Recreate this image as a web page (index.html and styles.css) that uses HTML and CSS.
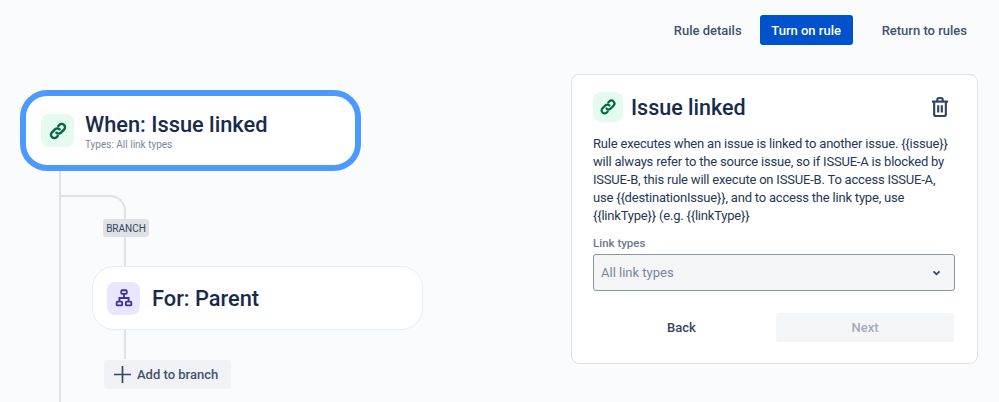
FILE: index.html
```html
<!DOCTYPE html>
<html lang="en">
<head>
<meta charset="utf-8">
<title>Rule</title>
<link rel="stylesheet" href="styles.css">
</head>
<body>
<div class="page">
  <nav class="topbar">
    <a class="nav-link nav-details">Rule details</a>
    <a class="nav-primary">Turn on rule</a>
    <a class="nav-link nav-return">Return to rules</a>
  </nav>
  <main class="workspace">
    <section class="canvas">
      <span class="line main-line"></span>
      <span class="branch-curve"></span>
      <span class="line branch-line"></span>
      <div class="trigger node">
        <span class="tile tile-green">
          <svg class="glyph" viewBox="0 0 24 24" fill="none" stroke="#006644" stroke-width="2.6" stroke-linecap="round"><path d="M10.2 13.8a3.6 3.6 0 0 0 5.1 0l3.3-3.3a3.6 3.6 0 0 0-5.1-5.1l-1.2 1.2"/><path d="M13.8 10.2a3.6 3.6 0 0 0-5.1 0l-3.3 3.3a3.6 3.6 0 0 0 5.1 5.1l1.2-1.2"/></svg>
        </span>
        <div class="node-text">
          <div class="node-title">When: Issue linked</div>
          <div class="node-sub">Types: All link types</div>
        </div>
      </div>
      <div class="branch-tag">BRANCH</div>
      <div class="for node">
        <span class="tile tile-purple">
          <svg class="glyph" viewBox="0 0 24 24" fill="none" stroke="#403294" stroke-width="2"><rect x="9" y="3.5" width="6" height="4" rx="1"/><rect x="4" y="16" width="6" height="4" rx="1"/><rect x="14" y="16" width="6" height="4" rx="1"/><path d="M12 7.500V12M7 16v-4h10v4"/></svg>
        </span>
        <div class="node-title">For: Parent</div>
      </div>
      <button class="add-branch">
        <svg class="plus" viewBox="0 0 16 16" stroke="#344563" stroke-width="1.600" fill="none"><path d="M8 0v16M0 8h16"/></svg>
        Add to branch
      </button>
    </section>
    <aside class="panel">
      <header class="panel-head">
        <span class="tile tile-green">
          <svg class="glyph" viewBox="0 0 24 24" fill="none" stroke="#006644" stroke-width="2.6" stroke-linecap="round"><path d="M10.2 13.8a3.6 3.6 0 0 0 5.1 0l3.3-3.3a3.6 3.6 0 0 0-5.1-5.1l-1.2 1.2"/><path d="M13.8 10.2a3.6 3.6 0 0 0-5.1 0l-3.3 3.3a3.6 3.6 0 0 0 5.1 5.1l1.2-1.2"/></svg>
        </span>
        <h2 class="panel-title">Issue linked</h2>
        <svg class="trash" viewBox="0 0 20 22" fill="none" stroke="#344563" stroke-width="2.400"><path d="M1 5h18"/><path d="M7 5V3a2 2 0 0 1 2-2h2a2 2 0 0 1 2 2v2"/><path d="M3.500 5v14a2 2 0 0 0 2 2h9a2 2 0 0 0 2-2V5"/><path d="M8 9v8M12 9v8"/></svg>
      </header>
      <p class="panel-desc">Rule executes when an issue is linked to another issue. {{issue}} will always refer to the source issue, so if ISSUE-A is blocked by ISSUE-B, this rule will execute on ISSUE-B. To access ISSUE-A, use {{destinationIssue}}, and to access the link type, use {{linkType}} (e.g. {{linkType}}</p>
      <label class="field-label">Link types</label>
      <div class="select">
        <span>All link types</span>
        <svg class="chev" viewBox="0 0 10 7" fill="none" stroke="#344563" stroke-width="2"><path d="M1.500 1.500 5 5l3.500-3.500"/></svg>
      </div>
      <div class="actions">
        <button class="btn btn-back">Back</button>
        <button class="btn btn-next">Next</button>
      </div>
    </aside>
  </main>
</div>
</body>
</html>
```
FILE: styles.css
```css
* { box-sizing: border-box; }
html, body { margin: 0; height: 100%; }
body {
  background: #fafbfc;
  font-family: Roboto, "Noto Sans", sans-serif;
  color: #172b4d;
  overflow: hidden;
}
.page { width: 999px; height: 402px; overflow: hidden; }
.topbar {
  display: flex;
  justify-content: flex-end;
  align-items: center;
  height: 30px;
  margin-top: 15px;
  padding-right: 32px;
  font-size: 13px;
  font-weight: 500;
}
.nav-link { color: #42526e; }
.nav-details { margin-right: 18px; }
.nav-return { margin-left: 29px; }
.nav-primary {
  display: flex;
  align-items: center;
  justify-content: center;
  width: 93px;
  height: 30px;
  background: #0052cc;
  color: #fff;
  border-radius: 3px;
}
.workspace {
  display: flex;
  justify-content: space-between;
  padding: 29px 21px 0 20px;
}
.canvas { position: relative; width: 420px; height: 328px; }
.line { position: absolute; background: #dfe1e6; width: 2px; }
.main-line { left: 39px; top: 90px; height: 240px; }
.branch-line { left: 104px; top: 140px; height: 145px; }
.branch-curve {
  position: absolute;
  left: 40px;
  top: 121px;
  width: 66px;
  height: 30px;
  border-top: 2px solid #dfe1e6;
  border-right: 2px solid #dfe1e6;
  border-top-right-radius: 16px;
}
.node {
  position: relative;
  display: flex;
  align-items: center;
  background: #fff;
}
.trigger {
  width: 341px;
  height: 81px;
  margin-top: 16px;
  padding-left: 15px;
  border: 6px solid #4c9aff;
  border-radius: 27px;
}
.tile {
  flex: none;
  display: flex;
  align-items: center;
  justify-content: center;
  width: 33px;
  height: 33px;
  border-radius: 8px;
}
.tile-green { background: #e3fcef; }
.tile-purple { background: #eae6ff; }
.glyph { width: 22px; height: 22px; }
.node-text { margin-left: 11px; margin-top: 1px; }
.node-title {
  font-size: 21.800px;
  line-height: 26px;
  font-weight: 500;
  color: #172b4d;
}
.node-sub {
  font-size: 10px;
  line-height: 12px;
  margin-top: 1px;
  color: #7a869a;
}
.branch-tag {
  position: relative;
  width: 46px;
  height: 18px;
  margin: 48px 0 0 83px;
  background: #dfe1e6;
  border-radius: 3px;
  font-size: 10px;
  line-height: 20px;
  text-align: center;
  color: #344563;
}
.for {
  width: 331px;
  height: 64px;
  margin: 29px 0 0 72px;
  padding-left: 14px;
  border: 1px solid #ebecf0;
  border-radius: 22px;
}
.for .node-title { margin-left: 12px; padding-top: 1px; }
.add-branch {
  position: relative;
  display: flex;
  align-items: center;
  width: 127px;
  height: 29px;
  margin: 30px 0 0 84px;
  padding: 0 0 0 10px;
  border: 0;
  border-radius: 3px;
  background: #f1f2f5;
  font: 500 13px Roboto, sans-serif;
  color: #42526e;
}
.plus { width: 17px; height: 17px; margin-right: 6px; }
.panel {
  width: 407px;
  height: 290px;
  padding: 17px 23px 0 21px;
  background: #fff;
  border: 1px solid #dfe1e6;
  border-radius: 8px;
}
.panel-head { display: flex; align-items: center; height: 30px; }
.panel-head .tile { width: 30px; height: 30px; }
.panel-head .glyph { width: 20px; height: 20px; }
.panel-title {
  flex: 1;
  margin: 0 0 0 8px;
  padding-top: 2px;
  font-size: 21.500px;
  line-height: 30px;
  font-weight: 500;
  color: #172b4d;
}
.trash { width: 18px; height: 22px; margin-right: 5px; }
.panel-desc {
  margin: 13px 0 0;
  font-size: 13px;
  letter-spacing: -0.2px;
  line-height: 18px;
  color: #253858;
}
.field-label {
  display: block;
  margin-top: 11px;
  font-size: 11.500px;
  line-height: 14px;
  font-weight: 500;
  color: #6b778c;
}
.select {
  display: flex;
  align-items: center;
  justify-content: space-between;
  width: 362px;
  height: 37px;
  margin-top: 4px;
  padding: 0 13px 0 7px;
  background: #f4f5f7;
  border: 1px solid #8993a4;
  border-radius: 3px;
  font-size: 13px;
  color: #7a869a;
}
.chev { width: 9px; height: 6px; }
.actions {
  display: flex;
  justify-content: space-between;
  margin-top: 22px;
}
.btn {
  width: 178px;
  height: 29px;
  border: 0;
  border-radius: 3px;
  background: transparent;
  font: 500 13px Roboto, sans-serif;
}
.btn-back { color: #344563; padding-left: 5px; }
.btn-next { background: #f4f5f7; color: #a5adba; }
```
